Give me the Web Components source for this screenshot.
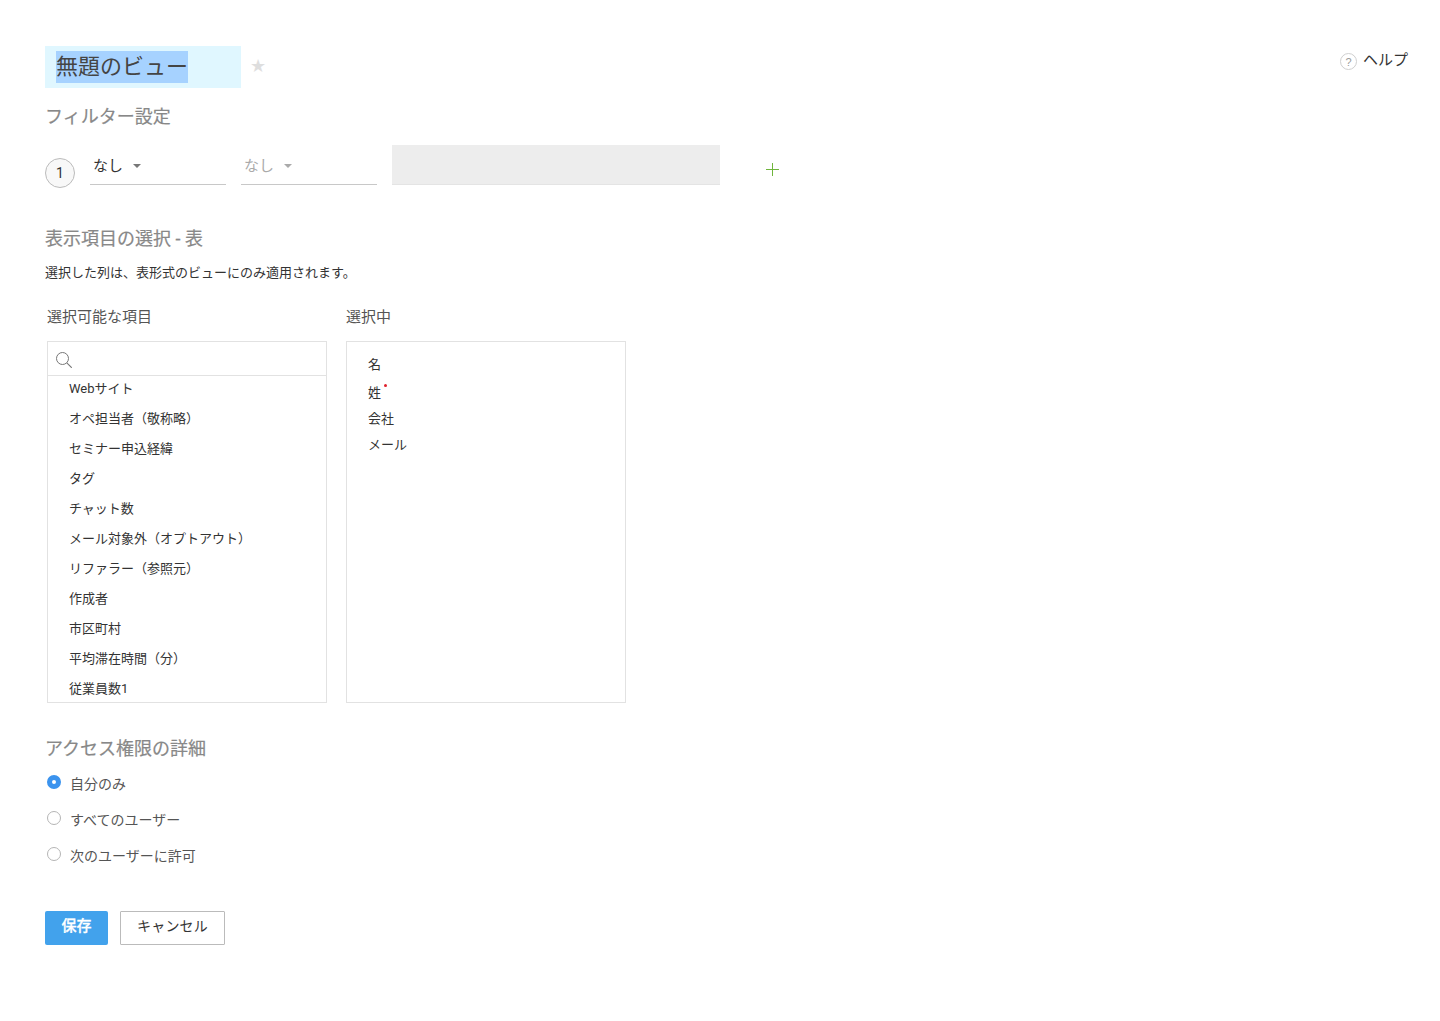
<!DOCTYPE html>
<html lang="ja">
<head>
<meta charset="utf-8">
<title>無題のビュー</title>
<style>
  html, body {
    margin: 0;
    background: #fff;
    font-family: "Liberation Sans", "Noto Sans CJK JP", sans-serif;
    color: #333;
  }
</style>
</head>
<body>
<view-editor>
  <view-header slot="header" title-text="無題のビュー"></view-header>

  <section-heading style="margin-top:16px">フィルター設定</section-heading>
  <filter-row></filter-row>

  <section-heading style="margin-top:41px">表示項目の選択 - 表</section-heading>
  <note-text>選択した列は、表形式のビューにのみ適用されます。</note-text>

  <column-picker>
    <field-box slot="available" label="選択可能な項目" searchable>
      <field-item>Webサイト</field-item>
      <field-item>オペ担当者（敬称略）</field-item>
      <field-item>セミナー申込経緯</field-item>
      <field-item>タグ</field-item>
      <field-item>チャット数</field-item>
      <field-item>メール対象外（オプトアウト）</field-item>
      <field-item>リファラー（参照元）</field-item>
      <field-item>作成者</field-item>
      <field-item>市区町村</field-item>
      <field-item>平均滞在時間（分）</field-item>
      <field-item>従業員数1</field-item>
    </field-box>
    <field-box slot="selected" label="選択中">
      <field-item compact>名</field-item>
      <field-item compact required>姓</field-item>
      <field-item compact>会社</field-item>
      <field-item compact>メール</field-item>
    </field-box>
  </column-picker>

  <section-heading style="margin-top:33px">アクセス権限の詳細</section-heading>
  <radio-group>
    <radio-option checked>自分のみ</radio-option>
    <radio-option>すべてのユーザー</radio-option>
    <radio-option>次のユーザーに許可</radio-option>
  </radio-group>

  <form-actions>
    <form-button primary>保存</form-button>
    <form-button>キャンセル</form-button>
  </form-actions>
</view-editor>

<script>
class ViewEditor extends HTMLElement {
  constructor() {
    super();
    this.attachShadow({ mode: "open" });
    this.shadowRoot.innerHTML = `
      <style>
        :host { display: block; padding: 46px 32px 0 45px; height: 975px; }
      </style>
      <slot name="header"></slot>
      <slot></slot>`;
  }
}

class ViewHeader extends HTMLElement {
  constructor() {
    super();
    this.attachShadow({ mode: "open" });
    const title = this.getAttribute("title-text") || "";
    this.shadowRoot.innerHTML = `
      <style>
        :host { display: flex; align-items: flex-start; height: 42px; }
        .field {
          width: 185px;
          height: 42px;
          padding-left: 11px;
          background: #e0f7ff;
          display: flex;
          align-items: center;
        }
        .field span {
          background: #a6d2ff;
          color: #444;
          font-size: 22px;
          line-height: 32px;
          height: 32px;
        }
        .star {
          margin: 10px 0 0 9px;
          width: 16px;
          height: 20px;
          color: #dedede;
          font: 18px/20px "DejaVu Sans", sans-serif;
        }
        .help {
          margin-left: auto;
          display: flex;
          align-items: center;
          gap: 6px;
          margin-top: 4px;
          font-size: 15px;
          line-height: 20px;
          color: #333;
        }
      </style>
      <div class="field"><span>${title}</span></div>
      <div class="star">★</div>
      <div class="help">
        <svg width="17" height="17" viewBox="0 0 17 17" style="margin-top:2px">
          <circle cx="8.5" cy="8.5" r="8" fill="none" stroke="#cfcfcf"/>
          <text x="8.5" y="12.5" text-anchor="middle" font-size="11" fill="#9a9a9a" font-family="Liberation Sans">?</text>
        </svg>
        <span>ヘルプ</span>
      </div>`;
  }
}

class SectionHeading extends HTMLElement {
  constructor() {
    super();
    this.attachShadow({ mode: "open" });
    this.shadowRoot.innerHTML = `
      <style>
        :host {
          display: block;
          font-family: Roboto, "Noto Sans CJK JP", sans-serif;
          font-size: 18px;
          line-height: 26px;
          color: #888;
          -webkit-text-stroke: 0.2px #888;
        }
      </style>
      <slot></slot>`;
  }
}

class NoteText extends HTMLElement {
  constructor() {
    super();
    this.attachShadow({ mode: "open" });
    this.shadowRoot.innerHTML = `
      <style>
        :host { display: block; margin-top: 11px; font-size: 13px; line-height: 20px; color: #333; }
      </style>
      <slot></slot>`;
  }
}

class FilterSelect extends HTMLElement {
  constructor() {
    super();
    this.attachShadow({ mode: "open" });
    const color = this.hasAttribute("disabled") ? "#aaa" : "#333";
    const arrow = this.hasAttribute("disabled") ? "#aaa" : "#777";
    this.shadowRoot.innerHTML = `
      <style>
        :host {
          display: flex;
          align-items: flex-start;
          box-sizing: border-box;
          width: 136px;
          height: 40px;
          padding: 11px 0 0 3px;
          border-bottom: 1px solid #c8c8c8;
          font-size: 15px;
          line-height: 20px;
          color: ${color};
        }
        i {
          width: 0;
          height: 0;
          margin: 8px 0 0 10px;
          border: 4.5px solid transparent;
          border-top: 4.5px solid ${arrow};
          border-bottom: 0;
        }
      </style>
      <slot></slot><i></i>`;
  }
}

class FilterRow extends HTMLElement {
  constructor() {
    super();
    this.attachShadow({ mode: "open" });
    this.shadowRoot.innerHTML = `
      <style>
        :host { display: flex; align-items: flex-start; margin-top: 15px; height: 40px; }
        .num {
          box-sizing: border-box;
          width: 30px;
          height: 30px;
          margin: 13px 15px 0 0;
          border: 1px solid #bbb;
          border-radius: 50%;
          background: #f8f8f8;
          font-family: Roboto, sans-serif;
          font-size: 14px;
          line-height: 28px;
          text-align: center;
          color: #333;
        }
        filter-select + filter-select { margin-left: 15px; }
        .value {
          box-sizing: border-box;
          width: 328px;
          height: 40px;
          margin-left: 15px;
          background: #ededed;
          border-bottom: 1px solid #e4e4e4;
        }
        svg { margin: 18px 0 0 46px; }
      </style>
      <div class="num">1</div>
      <filter-select>なし</filter-select>
      <filter-select disabled>なし</filter-select>
      <div class="value"></div>
      <svg width="13" height="13" viewBox="0 0 13 13">
        <path d="M6.5 0v13M0 6.5h13" stroke="#6fb53c" stroke-width="1" fill="none"/>
      </svg>`;
  }
}

class ColumnPicker extends HTMLElement {
  constructor() {
    super();
    this.attachShadow({ mode: "open" });
    this.shadowRoot.innerHTML = `
      <style>
        :host { display: flex; gap: 19px; margin: 22px 0 0 2px; }
      </style>
      <slot name="available"></slot>
      <slot name="selected"></slot>`;
  }
}

class FieldBox extends HTMLElement {
  constructor() {
    super();
    this.attachShadow({ mode: "open" });
    const search = this.hasAttribute("searchable") ? `
      <div class="search">
        <svg width="16" height="16" viewBox="0 0 16 16">
          <circle cx="6.5" cy="6.5" r="6" fill="none" stroke="#777" stroke-width="1"/>
          <path d="M10.8 10.8l5 5" stroke="#777" stroke-width="1.1" fill="none"/>
        </svg>
      </div>` : "";
    this.shadowRoot.innerHTML = `
      <style>
        :host { display: block; width: 280px; }
        .label { font-size: 15px; line-height: 24px; height: 24px; color: #555; }
        .box {
          box-sizing: border-box;
          height: 362px;
          margin-top: 12px;
          border: 1px solid #e2e2e2;
          display: flex;
          flex-direction: column;
        }
        .search {
          flex: none;
          box-sizing: border-box;
          height: 34px;
          padding: 10px 0 0 8px;
          border-bottom: 1px solid #e2e2e2;
        }
        .list { flex: 1; overflow: hidden; padding-left: 21px; }
        :host(:not([searchable])) .list { padding-top: 10px; }
        :host([searchable]) ::slotted(field-item:first-child) { margin-top: -2px; }
      </style>
      <div class="label">${this.getAttribute("label")}</div>
      <div class="box">
        ${search}
        <div class="list"><slot></slot></div>
      </div>`;
  }
}

class FieldItem extends HTMLElement {
  constructor() {
    super();
    this.attachShadow({ mode: "open" });
    const mark = this.hasAttribute("required") ? `<b></b>` : "";
    this.shadowRoot.innerHTML = `
      <style>
        :host {
          display: block;
          height: 30px;
          font-family: Roboto, "Noto Sans CJK JP", sans-serif;
          font-size: 13px;
          line-height: 30px;
          color: #333;
          white-space: nowrap;
        }
        :host([compact]) { height: 26px; line-height: 26px; }
        :host([required]) { height: 28px; line-height: 30px; }
        b {
          display: inline-block;
          width: 3px;
          height: 3px;
          margin: 0 0 10px 3px;
          border-radius: 50%;
          background: #e0202c;
        }
      </style>
      <slot></slot>${mark}`;
  }
}

class RadioGroup extends HTMLElement {
  constructor() {
    super();
    this.attachShadow({ mode: "open" });
    this.shadowRoot.innerHTML = `
      <style>
        :host { display: flex; flex-direction: column; gap: 16px; margin: 12px 0 0 2px; }
      </style>
      <slot></slot>`;
  }
}

class RadioOption extends HTMLElement {
  constructor() {
    super();
    this.attachShadow({ mode: "open" });
    this.shadowRoot.innerHTML = `
      <style>
        :host {
          display: flex;
          align-items: flex-start;
          gap: 9px;
          height: 20px;
          font-size: 14px;
          line-height: 20px;
          color: #555;
        }
        .dot {
          box-sizing: border-box;
          flex: none;
          width: 14px;
          height: 14px;
          margin-top: 1px;
          border: 1px solid #b5b5b5;
          border-radius: 50%;
          background: #fff;
        }
        :host([checked]) .dot {
          border: 5px solid #3b93ee;
          background: #fff;
        }
      </style>
      <div class="dot"></div>
      <span><slot></slot></span>`;
  }
}

class FormActions extends HTMLElement {
  constructor() {
    super();
    this.attachShadow({ mode: "open" });
    this.shadowRoot.innerHTML = `
      <style>
        :host { display: flex; gap: 12px; margin-top: 45px; }
      </style>
      <slot></slot>`;
  }
}

class FormButton extends HTMLElement {
  constructor() {
    super();
    this.attachShadow({ mode: "open" });
    this.shadowRoot.innerHTML = `
      <style>
        :host {
          box-sizing: border-box;
          display: block;
          height: 34px;
          padding: 0 16px;
          border: 1px solid #bbb;
          border-radius: 1px;
          font-size: 14px;
          letter-spacing: 0.2px;
          line-height: 28px;
          color: #333;
          background: #fff;
        }
        :host([primary]) {
          padding: 0 16.5px;
          border: none;
          border-radius: 2px;
          font-size: 15px;
          letter-spacing: 0;
          line-height: 29px;
          background: #42a2ec;
          color: #fff;
          font-weight: 500;
          -webkit-text-stroke: 0.3px #fff;
        }
      </style>
      <slot></slot>`;
  }
}

customElements.define("view-editor", ViewEditor);
customElements.define("view-header", ViewHeader);
customElements.define("section-heading", SectionHeading);
customElements.define("note-text", NoteText);
customElements.define("filter-select", FilterSelect);
customElements.define("filter-row", FilterRow);
customElements.define("column-picker", ColumnPicker);
customElements.define("field-box", FieldBox);
customElements.define("field-item", FieldItem);
customElements.define("radio-group", RadioGroup);
customElements.define("radio-option", RadioOption);
customElements.define("form-actions", FormActions);
customElements.define("form-button", FormButton);
</script>
</body>
</html>
